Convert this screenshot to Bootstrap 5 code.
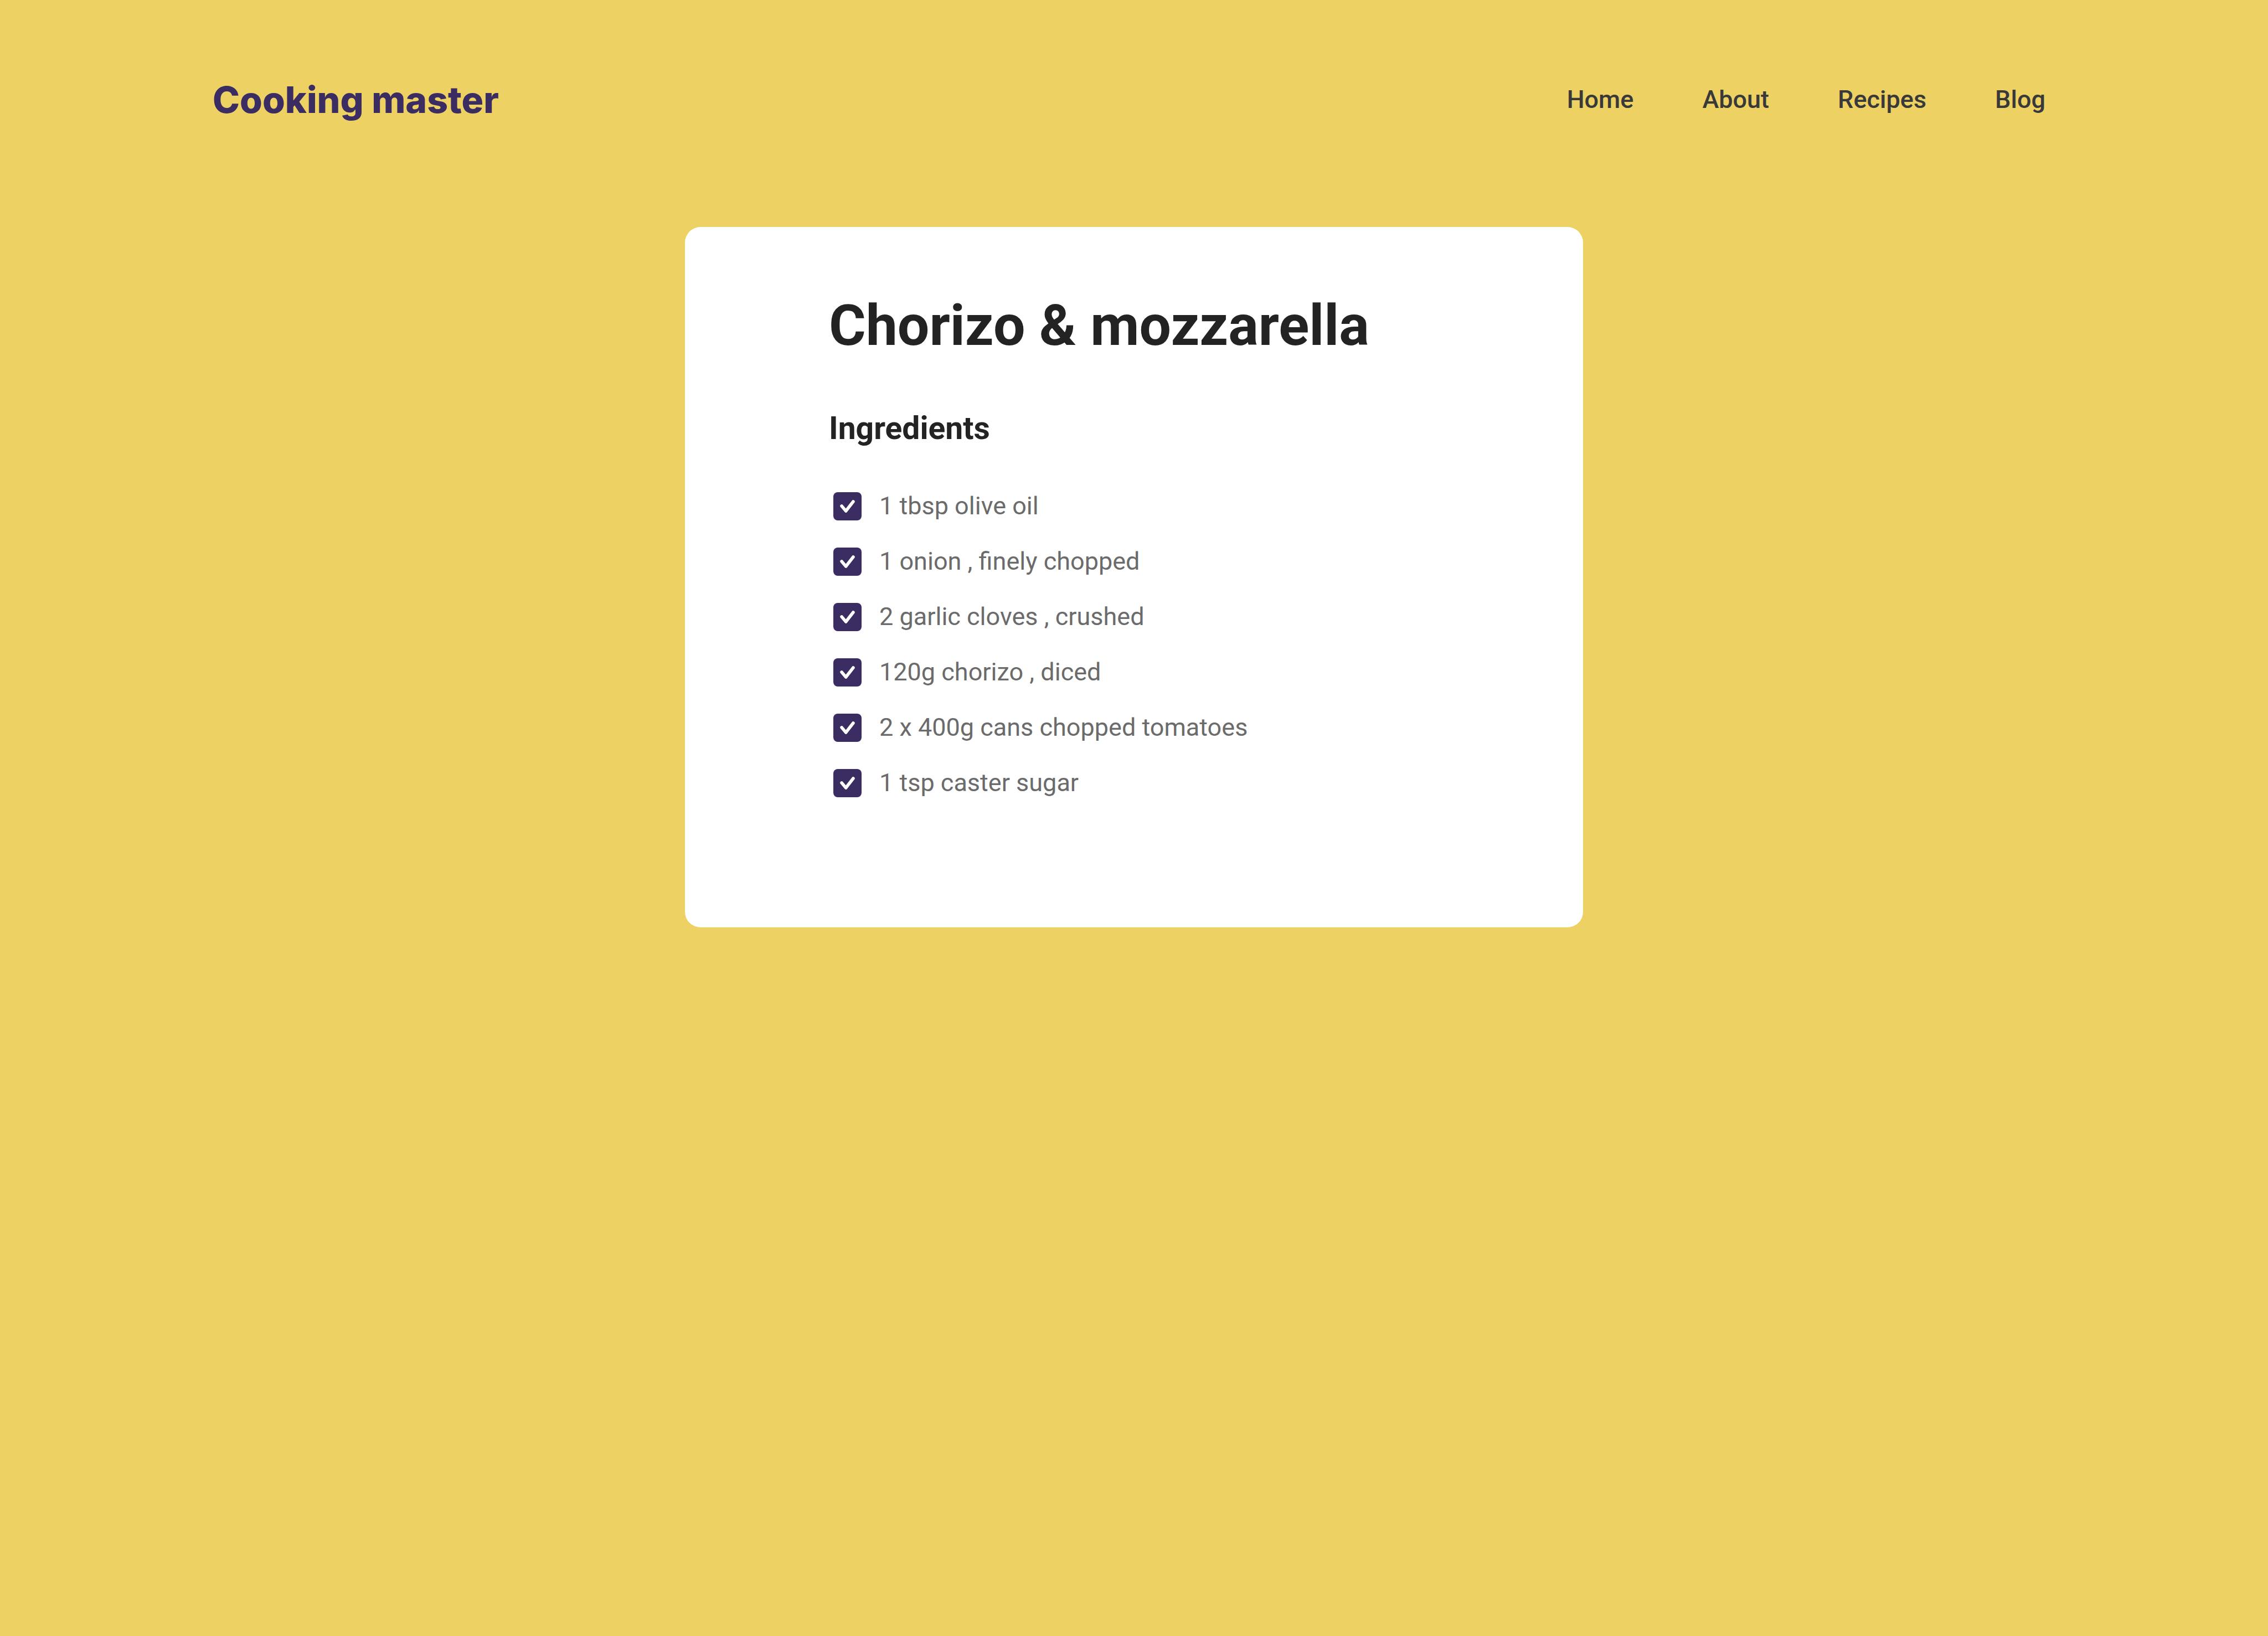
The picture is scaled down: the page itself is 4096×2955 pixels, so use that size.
<!DOCTYPE html>
<html lang="en">
<head>
<meta charset="utf-8">
<meta name="viewport" content="width=device-width, initial-scale=1">
<title>Cooking master</title>
<link href="https://cdn.jsdelivr.net/npm/bootstrap@5.3.0/dist/css/bootstrap.min.css" rel="stylesheet">
<style>
  body { background: #edd263; font-family: Roboto, "Liberation Sans", sans-serif; }
  .site-shell { max-width: 3328px; }
  .site-header { padding: 120px 0; }
  .site-logo { font-family: Inter, "Open Sans", sans-serif; font-size: 66px; font-weight: 800; line-height: 120px; color: #3b2c61; }
  .site-menu { gap: 124px; padding-right: 18px; }
  .site-menu .nav-link { font-size: 45px; line-height: 60px; font-weight: 500; color: #393939; }
  .site-main { padding-top: 50px; }
  .recipe { max-width: 1622px; border-radius: 28px; padding: 118px 200px 211px 260px; }
  .recipe-title { font-size: 102px; line-height: 120px; margin-bottom: 92px; color: #232323; }
  .recipe-sub { font-size: 57px; line-height: 68px; margin-bottom: 56px; color: #232323; }
  .ingredient { height: 100px; gap: 32px; padding-left: 8px; }
  .ingredient .form-check-input { width: 51px; height: 51px; border: 0; border-radius: 8px; }
  .ingredient .form-check-input:checked {
    background-color: #3b2c61;
    background-size: 100% 100%;
    background-image: url("data:image/svg+xml,%3Csvg xmlns='http://www.w3.org/2000/svg' viewBox='0 0 54 54'%3E%3Cpath d='M16 26.5L24 36L38 18' fill='none' stroke='%23fff' stroke-width='6' stroke-linecap='round' stroke-linejoin='round'/%3E%3C/svg%3E");
  }
  .ingredient .form-check-label { font-size: 45px; line-height: 60px; color: #6b6b6b; }
</style>
</head>
<body>
<header class="site-shell site-header navbar navbar-expand mx-auto">
  <a class="site-logo navbar-brand m-0 p-0" href="#">Cooking master</a>
  <nav class="ms-auto" aria-label="Main">
    <ul class="site-menu navbar-nav">
      <li class="nav-item"><a class="nav-link p-0" href="#">Home</a></li>
      <li class="nav-item"><a class="nav-link p-0" href="#">About</a></li>
      <li class="nav-item"><a class="nav-link p-0" href="#">Recipes</a></li>
      <li class="nav-item"><a class="nav-link p-0" href="#">Blog</a></li>
    </ul>
  </nav>
</header>
<main class="site-main">
  <article class="recipe bg-white w-100 mx-auto">
    <h1 class="recipe-title fw-bold">Chorizo &amp; mozzarella</h1>
    <h2 class="recipe-sub fw-bold">Ingredients</h2>
    <ul class="list-unstyled m-0">
      <li class="ingredient d-flex align-items-center"><input class="form-check-input m-0 flex-shrink-0" type="checkbox" id="ing1" checked><label class="form-check-label" for="ing1">1 tbsp olive oil</label></li>
      <li class="ingredient d-flex align-items-center"><input class="form-check-input m-0 flex-shrink-0" type="checkbox" id="ing2" checked><label class="form-check-label" for="ing2">1 onion , finely chopped</label></li>
      <li class="ingredient d-flex align-items-center"><input class="form-check-input m-0 flex-shrink-0" type="checkbox" id="ing3" checked><label class="form-check-label" for="ing3">2 garlic cloves , crushed</label></li>
      <li class="ingredient d-flex align-items-center"><input class="form-check-input m-0 flex-shrink-0" type="checkbox" id="ing4" checked><label class="form-check-label" for="ing4">120g chorizo , diced</label></li>
      <li class="ingredient d-flex align-items-center"><input class="form-check-input m-0 flex-shrink-0" type="checkbox" id="ing5" checked><label class="form-check-label" for="ing5">2 x 400g cans chopped tomatoes</label></li>
      <li class="ingredient d-flex align-items-center"><input class="form-check-input m-0 flex-shrink-0" type="checkbox" id="ing6" checked><label class="form-check-label" for="ing6">1 tsp caster sugar</label></li>
    </ul>
  </article>
</main>
<script src="https://cdn.jsdelivr.net/npm/bootstrap@5.3.0/dist/js/bootstrap.bundle.min.js"></script>
</body>
</html>
